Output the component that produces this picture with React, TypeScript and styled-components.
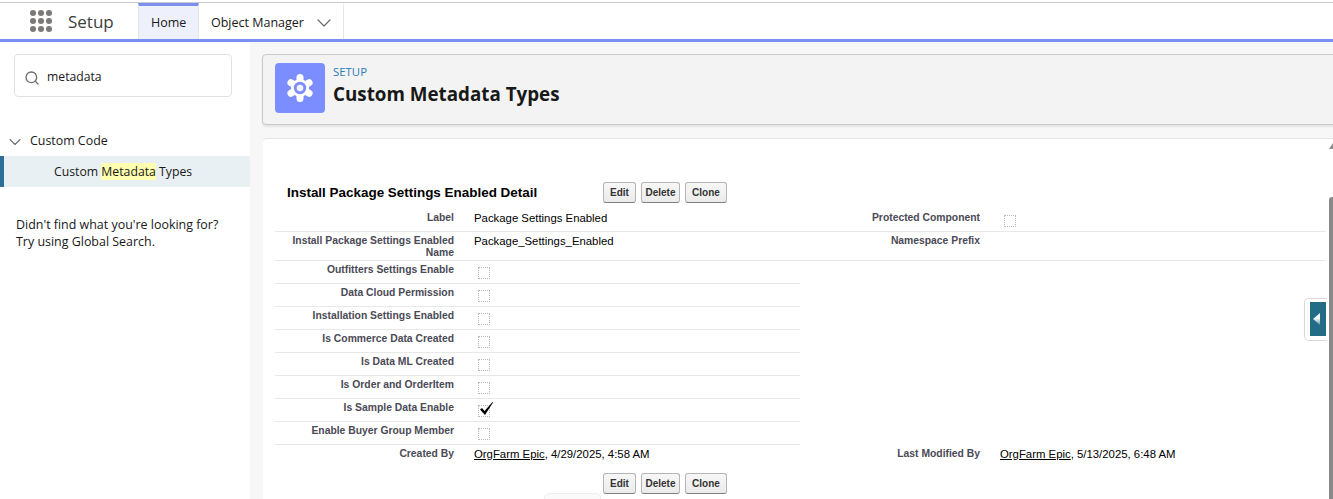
import React from "react";
import styled, { createGlobalStyle } from "styled-components";
import { FiChevronDown, FiSearch } from "react-icons/fi";

const GlobalStyle = createGlobalStyle`
  html, body {
    margin: 0;
    padding: 0;
    height: 499px;
    overflow: hidden;
    background: #ffffff;
  }
  * {
    box-sizing: border-box;
  }
`;

const UI_FONT = `"Open Sans", "Noto Sans", sans-serif`;
const CLASSIC_FONT = `"Liberation Sans", Arial, sans-serif`;

const Page = styled.div`
  position: relative;
  display: flex;
  flex-direction: column;
  width: 1333px;
  height: 499px;
  overflow: hidden;
  font-family: ${UI_FONT};
  color: #181818;
`;

const NavBar = styled.header`
  display: flex;
  align-items: stretch;
  flex-shrink: 0;
  height: 40px;
  margin-top: 2px;
  border-top: 1px solid #c9c9c9;
  border-bottom: 3px solid #7b8ff0;
  background: #ffffff;
`;

const AppLauncher = styled.div`
  display: grid;
  grid-template-columns: repeat(3, 6px);
  grid-auto-rows: 6px;
  gap: 2px;
  align-content: center;
  margin-left: 30px;
  width: 38px;
`;

const Dot = styled.span`
  width: 6px;
  height: 6px;
  border-radius: 50%;
  background: #7a7977;
`;

const AppName = styled.div`
  display: flex;
  align-items: center;
  width: 70px;
  font-size: 17px;
  color: #3e3e3c;
`;

const Tab = styled.div<{ $active?: boolean; $width: number }>`
  display: flex;
  align-items: center;
  gap: 8px;
  width: ${(p) => p.$width}px;
  padding-left: 12px;
  font-size: 12.5px;
  color: #181818;
  background: ${(p) => (p.$active ? "#eef1fc" : "#ffffff")};
  border-top: 3px solid ${(p) => (p.$active ? "#7b8ff0" : "transparent")};
  border-right: 1px solid #e5e5e5;
  border-left: ${(p) => (p.$active ? "1px solid #e5e5e5" : "none")};
`;

const Body = styled.div`
  display: flex;
  flex: 1;
  min-height: 0;
`;

const Sidebar = styled.aside`
  width: 250px;
  flex-shrink: 0;
  background: #ffffff;
  padding-top: 12px;
`;

const SearchBox = styled.div`
  display: flex;
  align-items: center;
  gap: 7px;
  width: 218px;
  height: 43px;
  margin-left: 14px;
  padding: 1px 0 0 9px;
  border: 1px solid #e2e2e2;
  border-radius: 4px;
  font-size: 12.2px;
  color: #181818;
`;

const SearchGlyph = styled(FiSearch)`
  margin-top: 3px;
`;

const TreeHeading = styled.div`
  display: flex;
  align-items: center;
  gap: 5px;
  height: 20px;
  margin-top: 33px;
  padding-left: 5px;
  font-size: 12.4px;
`;

const TreeChevron = styled(FiChevronDown)`
  margin-top: 4px;
`;

const TreeItem = styled.div`
  display: flex;
  align-items: center;
  height: 31px;
  margin-top: 6px;
  padding-left: 50px;
  border-left: 4px solid #2e6f99;
  background: #e8f0f4;
  font-size: 12.25px;
  white-space: pre;
`;

const Highlight = styled.mark`
  background: #ffffb0;
  color: inherit;
`;

const NotFound = styled.p`
  margin: 29px 0 0 16px;
  font-size: 12.45px;
  line-height: 17px;
`;

const Main = styled.main`
  flex: 1;
  min-width: 0;
  padding: 12px 0 0 12px;
  background: #f7f7f7;
`;

const PageHeader = styled.div`
  display: flex;
  align-items: flex-start;
  gap: 8px;
  height: 71px;
  margin-right: -4px;
  padding: 8px 0 0 12px;
  background: #f3f3f3;
  border: 1px solid #c9c9c9;
  border-radius: 4px;
  box-shadow: 0 2px 2px rgba(0, 0, 0, 0.08);
`;

const HeaderIcon = styled.div`
  display: flex;
  align-items: center;
  justify-content: center;
  width: 50px;
  height: 50px;
  border-radius: 4px;
  background: #7b8dff;
`;

const HeaderText = styled.div`
  display: flex;
  flex-direction: column;
  margin-top: 1px;
`;

const Eyebrow = styled.span`
  font-size: 11.4px;
  line-height: 15px;
  color: #2e7cb5;
`;

const PageTitle = styled.h1`
  margin: 2px 0 0;
  font-size: 18.8px;
  line-height: 27px;
  font-weight: 700;
  color: #181818;
`;

const Card = styled.section`
  height: 400px;
  margin: 13px 0 0 1px;
  padding: 43px 7px 0 12px;
  background: #ffffff;
  border-top: 1px solid #e4e4e4;
  border-top-left-radius: 4px;
  font-family: ${CLASSIC_FONT};
`;

const TitleRow = styled.div`
  display: flex;
  align-items: center;
  height: 21px;
`;

const DetailTitle = styled.h2`
  width: 328px;
  flex-shrink: 0;
  margin: 0;
  padding-left: 12px;
  font-size: 13.45px;
  font-weight: 700;
  color: #000000;
`;

const ButtonGroup = styled.div<{ $bottom?: boolean }>`
  display: flex;
  gap: 5px;
  margin-left: ${(p) => (p.$bottom ? "328px" : "0")};
  margin-top: ${(p) => (p.$bottom ? "5px" : "0")};
`;

const ClassicButton = styled.button<{ $width: number }>`
  width: ${(p) => p.$width}px;
  height: 21px;
  padding: 0;
  border: 1px solid #b5b5b5;
  border-bottom-color: #7f7f7f;
  border-radius: 3px;
  background: linear-gradient(#f7f7f7, #ebebeb);
  font-family: ${CLASSIC_FONT};
  font-size: 10px;
  font-weight: 700;
  color: #333333;
`;

const Rows = styled.div`
  margin-top: 6px;
`;

const Row = styled.div<{ $half?: boolean; $height: number }>`
  display: grid;
  grid-template-columns: 179px 346px 180px 1fr;
  width: ${(p) => (p.$half ? "525px" : "auto")};
  height: ${(p) => p.$height}px;
  border-bottom: 1px solid #e8e8e8;
`;

const LastRow = styled(Row)`
  border-bottom-color: transparent;
`;

const Label = styled.div`
  padding-top: 3px;
  font-size: 10.35px;
  line-height: 12px;
  font-weight: 700;
  text-align: right;
  color: #4a4a56;
`;

const Value = styled.div`
  padding: 3px 0 0 20px;
  font-size: 11.36px;
  line-height: 13px;
  color: #000000;
`;

const UserLink = styled.a`
  color: #000000;
  text-decoration: underline;
`;

const CheckBox = styled.span`
  position: relative;
  display: block;
  width: 12px;
  height: 12px;
  margin: 3px 0 0 4px;
  border: 1px dotted #b8b8b8;
`;

const CheckMark = styled.svg`
  position: absolute;
  left: 0;
  top: -5px;
`;

const ScrollThumb = styled.div`
  position: absolute;
  right: 0;
  top: 197px;
  width: 4px;
  height: 302px;
  border-radius: 3px 0 0 0;
  background: #8a8a8a;
`;

const ScrollArrow = styled.div`
  position: absolute;
  right: 0;
  top: 143px;
  width: 0;
  height: 0;
  border-left: 4px solid transparent;
  border-bottom: 6px solid #8a8a8a;
`;

const SideToggle = styled.div`
  position: absolute;
  left: 1304px;
  top: 298px;
  width: 23px;
  height: 43px;
  padding: 3px 1px 0 5px;
  background: #ffffff;
  border: 1px solid #d8d8d8;
  border-right: none;
  border-radius: 5px 0 0 5px;
`;

const ToggleFace = styled.div`
  display: flex;
  align-items: center;
  width: 16px;
  height: 34px;
  padding-left: 3px;
  background: #236c88;
`;

const ToggleArrow = styled.span`
  width: 7px;
  height: 12px;
  background: linear-gradient(#f4f7f8, #f4f7f8 45%, #5f94a8);
  clip-path: polygon(100% 0, 100% 100%, 0 50%);
`;

const PeekButton = styled.div`
  position: absolute;
  left: 544px;
  top: 493px;
  width: 57px;
  height: 10px;
  background: #fafafa;
  border: 1px solid #eeeeee;
  border-radius: 5px 5px 0 0;
`;

const GearIcon = () => (
  <svg width="28" height="28" viewBox="0 0 28 28" fill="none">
    <g stroke="#ffffff" strokeWidth="7" strokeLinecap="round">
      <path d="M14 3.500V24.500" />
      <path d="M4.900 8.750L23.100 19.250" />
      <path d="M23.100 8.750L4.900 19.250" />
    </g>
    <circle cx="14" cy="14" r="9" fill="#ffffff" />
    <circle cx="14" cy="14" r="6.200" fill="#7b8dff" />
    <circle cx="14" cy="14" r="3.300" fill="#f0f2ff" />
  </svg>
);

const Tick = () => (
  <CheckMark width="16" height="16" viewBox="0 0 16 16">
    <path d="M1 8.500l2-1.500L5.500 10 13.500 1l.5.500L6 14z" fill="#000000" />
  </CheckMark>
);

const leftFlags = [
  { label: "Outfitters Settings Enable", checked: false },
  { label: "Data Cloud Permission", checked: false },
  { label: "Installation Settings Enabled", checked: false },
  { label: "Is Commerce Data Created", checked: false },
  { label: "Is Data ML Created", checked: false },
  { label: "Is Order and OrderItem", checked: false },
  { label: "Is Sample Data Enable", checked: true },
  { label: "Enable Buyer Group Member", checked: false },
];

const Buttons = ({ bottom }: { bottom?: boolean }) => (
  <ButtonGroup $bottom={bottom}>
    <ClassicButton $width={33}>Edit</ClassicButton>
    <ClassicButton $width={39}>Delete</ClassicButton>
    <ClassicButton $width={42}>Clone</ClassicButton>
  </ButtonGroup>
);

export default function App() {
  return (
    <Page>
      <GlobalStyle />
      <NavBar>
        <AppLauncher>
          {Array.from({ length: 9 }).map((_, i) => (
            <Dot key={i} />
          ))}
        </AppLauncher>
        <AppName>Setup</AppName>
        <Tab $active $width={61}>
          Home
        </Tab>
        <Tab $width={145}>
          Object Manager
          <FiChevronDown size={24} color="#706e6b" strokeWidth={1.3} />
        </Tab>
      </NavBar>
      <Body>
        <Sidebar>
          <SearchBox>
            <SearchGlyph size={16} color="#706e6b" />
            metadata
          </SearchBox>
          <TreeHeading>
            <TreeChevron size={20} color="#706e6b" strokeWidth={1.3} />
            Custom Code
          </TreeHeading>
          <TreeItem>
            Custom <Highlight>Metadata</Highlight> Types
          </TreeItem>
          <NotFound>
            Didn't find what you're looking for?
            <br />
            Try using Global Search.
          </NotFound>
        </Sidebar>
        <Main>
          <PageHeader>
            <HeaderIcon>
              <GearIcon />
            </HeaderIcon>
            <HeaderText>
              <Eyebrow>SETUP</Eyebrow>
              <PageTitle>Custom Metadata Types</PageTitle>
            </HeaderText>
          </PageHeader>
          <Card>
            <TitleRow>
              <DetailTitle>Install Package Settings Enabled Detail</DetailTitle>
              <Buttons />
            </TitleRow>
            <Rows>
              <Row $height={23}>
                <Label>Label</Label>
                <Value>Package Settings Enabled</Value>
                <Label>Protected Component</Label>
                <Value>
                  <CheckBox />
                </Value>
              </Row>
              <Row $height={29}>
                <Label>
                  Install Package Settings Enabled
                  <br />
                  Name
                </Label>
                <Value>Package_Settings_Enabled</Value>
                <Label>Namespace Prefix</Label>
                <Value />
              </Row>
              {leftFlags.map((flag) => (
                <Row $half $height={23} key={flag.label}>
                  <Label>{flag.label}</Label>
                  <Value>
                    <CheckBox>{flag.checked && <Tick />}</CheckBox>
                  </Value>
                </Row>
              ))}
              <LastRow $height={23}>
                <Label>Created By</Label>
                <Value>
                  <UserLink>OrgFarm Epic</UserLink>, 4/29/2025, 4:58 AM
                </Value>
                <Label>Last Modified By</Label>
                <Value>
                  <UserLink>OrgFarm Epic</UserLink>, 5/13/2025, 6:48 AM
                </Value>
              </LastRow>
            </Rows>
            <Buttons bottom />
          </Card>
        </Main>
      </Body>
      <ScrollArrow />
      <ScrollThumb />
      <SideToggle>
        <ToggleFace>
          <ToggleArrow />
        </ToggleFace>
      </SideToggle>
      <PeekButton />
    </Page>
  );
}
